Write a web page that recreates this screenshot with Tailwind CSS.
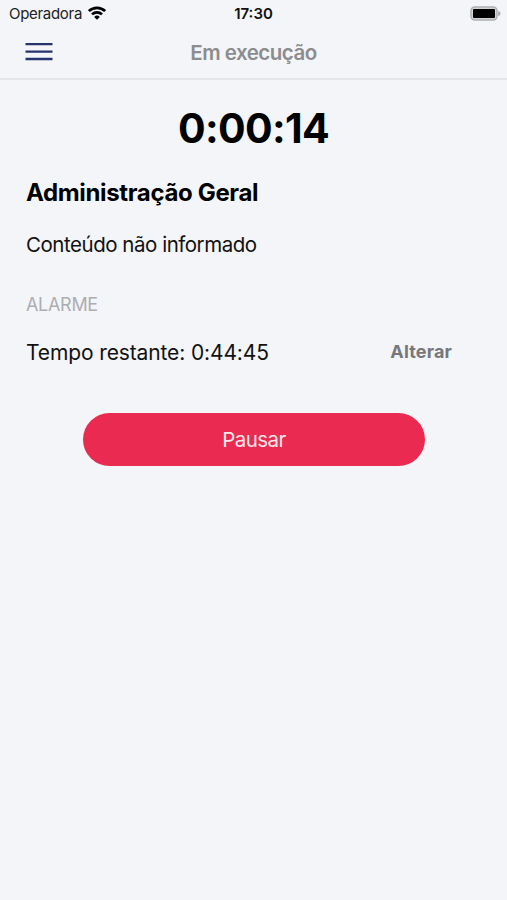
<!DOCTYPE html>
<html lang="pt-BR">
<head>
  <meta charset="UTF-8" />
  <meta name="viewport" content="width=device-width, initial-scale=1.0"/>
  <title>Em execução</title>
  <script src="https://cdn.jsdelivr.net/npm/@tailwindcss/browser@4"></script>
  <style>
    body {
      font-family: 'Inter', sans-serif;
    }
  </style>
</head>
<body class="bg-[#f3f5f9] min-h-screen text-black whitespace-nowrap">
  <!-- Status bar -->
  <div class="grid grid-cols-3 items-center h-7 pl-[9px] pr-[6px]">
    <div class="flex items-center gap-[6px]">
      <span class="text-[15px] tracking-[-0.3px] text-[#222]">Operadora</span>
      <svg class="w-[18px] h-[14px] -mt-[2px]" viewBox="0 0 18 14" fill="none" stroke="#000" stroke-width="2.7">
        <path d="M0.9 5.1a11.6 11.6 0 0 1 16.2 0" />
        <path d="M4 8.4a7.2 7.2 0 0 1 10 0" />
        <path d="M9 13.8 6.2 10.9a4 4 0 0 1 5.6 0Z" fill="#000" stroke="none" />
      </svg>
    </div>
    <span class="-ml-[3px] text-center text-[15px] font-semibold text-[#111]">17:30</span>
    <svg class="w-[31px] h-[15px] justify-self-end -mt-[2px]" viewBox="0 0 31 15">
      <rect x="1" y="1" width="26" height="13" rx="3.8" fill="#d4d4d6" stroke="#b0b0b2" stroke-width="1.5" />
      <rect x="3" y="3" width="22" height="9" rx="1" fill="#000" />
      <path d="M28.2 4.9c1.6.5 2.3 1.5 2.3 2.6s-.7 2.1-2.3 2.6Z" fill="#a9a9ab" />
    </svg>
  </div>

  <!-- Header -->
  <header class="grid grid-cols-3 items-center h-[52px] px-[25px] border-b-2 border-[#e4e5e8]">
    <button class="pb-[4px]">
      <svg class="w-[28px] h-[19px]" viewBox="0 0 28 19" stroke="#26336f" stroke-width="2.3">
        <path d="M0.5 2.2H27.5M0.5 9.6H27.5M0.5 17H27.5" />
      </svg>
    </button>
    <h1 class="text-center text-[20.5px] tracking-[-0.5px] font-semibold text-[#8c8c8f]">Em execução</h1>
  </header>

  <!-- Timer -->
  <main class="px-[26px]">
    <p class="mt-[18px] text-center text-[41px] leading-[60px] tracking-[-0.7px] font-bold">0:00:14</p>
    <h2 class="mt-[19px] text-[24px] leading-8 tracking-[-0.35px] font-bold">Administração Geral</h2>
    <p class="mt-5 text-[20.5px] leading-8 tracking-[-0.47px] text-[#111]">Conteúdo não informado</p>

    <h3 class="mt-7 text-[18px] leading-8 tracking-[-0.3px] text-[#adadb0]">ALARME</h3>
    <div class="mt-4 flex items-center justify-between pr-[29px]">
      <p class="text-[21px] leading-8 tracking-[-0.12px] text-[#111]">Tempo restante: 0:44:45</p>
      <button class="pb-[3px] text-[18px] tracking-[0.15px] font-bold text-[#77777a]">Alterar</button>
    </div>

    <button class="mt-[44px] ml-[57px] block w-[342px] h-[53px] pt-[2px] rounded-full bg-[#ea2a50] text-[20.5px] tracking-[-0.55px] text-[#fde8ec]">Pausar</button>
  </main>
</body>
</html>
